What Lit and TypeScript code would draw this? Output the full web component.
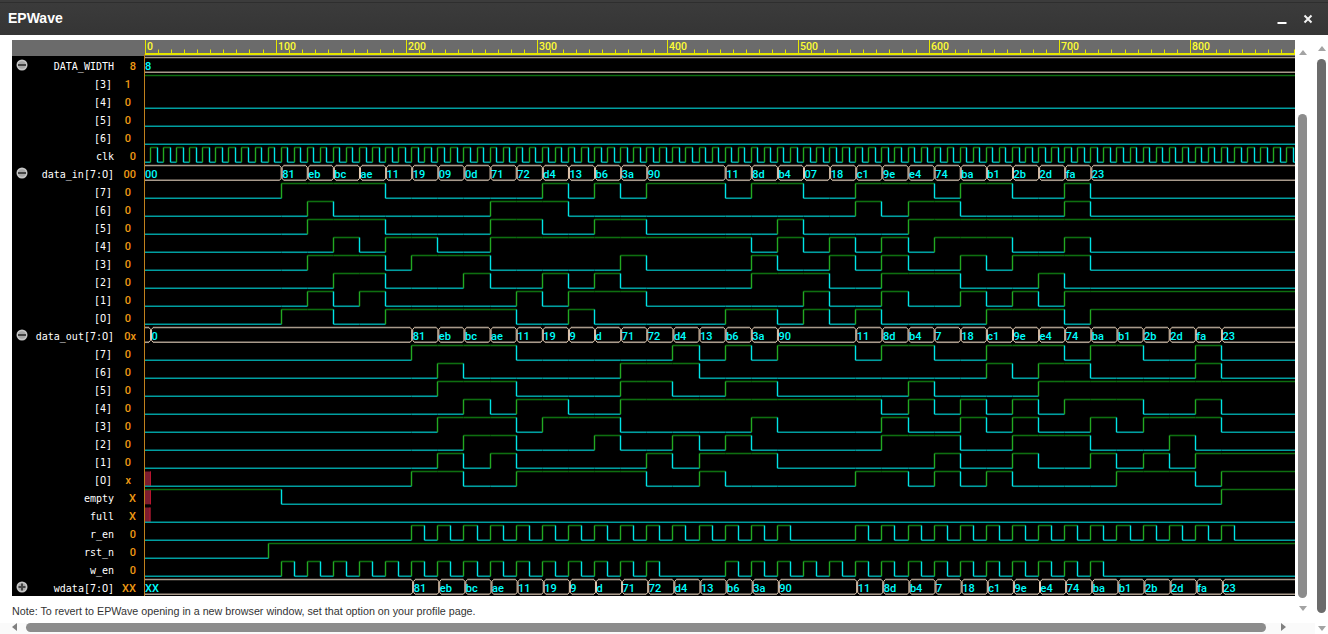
import {LitElement, html, css, svg} from 'lit';
import {customElement} from 'lit/decorators.js';

// time axis of the wave plot
const T0 = 145;
const SCALE = 1.306;
const PLOT_W = 1150;
const ROW = 18;
const TEND = 890;
const xAt = (t: number) => T0 + t * SCALE;
// edges sit on a pixel column, just left of the nominal time
const snap = (x: number) => Math.floor(x) - 0.5;

const IN_VALUES: [number, string][] = [
  [0, '00'], [105, '81'], [125, 'eb'], [145, 'bc'], [165, 'ae'], [185, '11'], [205, '19'], [225, '09'],
  [245, '0d'], [265, '71'], [285, '72'], [305, 'd4'], [325, '13'], [345, 'b6'], [365, '3a'], [385, '90'],
  [445, '11'], [465, '8d'], [485, 'b4'], [505, '07'], [525, '18'], [545, 'c1'], [565, '9e'], [585, 'e4'],
  [605, '74'], [625, 'ba'], [645, 'b1'], [665, '2b'], [685, '2d'], [705, 'fa'], [725, '23'],
];

const strip0 = (v: string) => (v.startsWith('0') && v.length === 2 ? v.slice(1) : v);

// data_out follows data_in 100 later, printed without the leading zero
const OUT_VALUES: [number, string][] = [
  [5, '0'],
  ...IN_VALUES.slice(1).map(([t, v]): [number, string] => [t + 100, strip0(v)]),
];

const WDATA_VALUES: [number, string][] = [[0, 'XX'], ...OUT_VALUES.slice(1)];

type Sig = {
  name: string;
  val: string;
  icon?: 'minus' | 'plus';
  bit?: boolean;
  draw: () => unknown;
};

const bitEdges = (vals: [number, string][], bit: number): [number, number][] =>
  vals.map(([t, v]) => [t, (parseInt(v, 16) >> bit) & 1]);

const pulses = (ranges: [number, number][]) => {
  const out: [number, number][] = [[0, 0]];
  for (const [a, b] of ranges) {
    for (let t = a; t < b; t += 20) {
      out.push([t, 1], [t + 10, 0]);
    }
  }
  return out;
};

function clkEdges() {
  const out: [number, number][] = [[0, 0]];
  for (let t = 5; t < TEND; t += 10) {
    out.push([t, 1], [t + 5, 0]);
  }
  return out;
}

// one bit signal: dark green high, teal low, bright edges
function logic(i: number, edges: [number, number][], start = 0) {
  const hi = 57.5 + ROW * i;
  const lo = 72.25 + ROW * i;
  const parts: unknown[] = [];
  for (let k = 0; k < edges.length; k++) {
    const [t, v] = edges[k];
    if (t < start && k + 1 < edges.length && edges[k + 1][0] <= start) continue;
    const a = t === 0 ? T0 : snap(xAt(Math.max(t, start)));
    const b = k + 1 < edges.length ? snap(xAt(edges[k + 1][0])) : xAt(TEND);
    parts.push(svg`<line class=${v ? 'high' : 'low'} x1=${a} x2=${b} y1=${v ? hi : lo} y2=${v ? hi : lo}></line>`);
    if (k > 0 && edges[k - 1][1] !== v) {
      parts.push(svg`<line class=${v ? 'rise' : 'fall'} x1=${a} x2=${a} y1=${hi} y2=${lo}></line>`);
    }
  }
  return parts;
}

function unknownBox(i: number, w: number) {
  const y = 57.5 + ROW * i;
  return svg`<rect class="xbox" x=${T0} y=${y} width=${w} height="14.8"></rect>
    <rect class="xedge" x=${T0 + w - 1} y=${y} width="1" height="14.8"></rect>`;
}

function bus(i: number, vals: [number, string][], shift = 0) {
  const top = 57.5 + ROW * i;
  const bot = 72.25 + ROW * i;
  const parts: unknown[] = [];
  vals.forEach(([t, v], k) => {
    const a = k === 0 ? T0 : xAt(t) + shift - 0.5;
    const b = k + 1 < vals.length ? xAt(vals[k + 1][0]) + shift - 0.5 : xAt(TEND);
    const l = k === 0 ? a : a + 2;
    const r = b - 2;
    parts.push(svg`<line class="bus" x1=${l} x2=${r} y1=${top} y2=${top}></line>`);
    parts.push(svg`<line class="bus" x1=${l} x2=${r} y1=${bot} y2=${bot}></line>`);
    if (k > 0) {
      parts.push(svg`<path class="cross" d="M${a - 2} ${top}L${a - 0.5} ${top + 2}V${bot - 2}L${a - 2} ${bot}M${a + 2} ${top}L${a + 0.5} ${top + 2}V${bot - 2}L${a + 2} ${bot}"></path>`);
    }
    parts.push(svg`<text class="busval" x=${k === 0 ? a : a + 0.5} y=${top + 12}>${v}</text>`);
  });
  return parts;
}

const inBit = (n: number, i: number) => logic(i, bitEdges(IN_VALUES, n));
const outBit = (n: number, i: number) => logic(i, bitEdges([[0, '00'], ...OUT_VALUES.slice(1)], n));

const SIGNALS: Sig[] = [
  {name: 'DATA_WIDTH', val: '8', icon: 'minus', draw: () => bus(0, [[0, '8']])},
  {name: '[3]', val: '1', bit: true, draw: () => logic(1, [[0, 1]])},
  {name: '[4]', val: '0', bit: true, draw: () => logic(2, [[0, 0]])},
  {name: '[5]', val: '0', bit: true, draw: () => logic(3, [[0, 0]])},
  {name: '[6]', val: '0', bit: true, draw: () => logic(4, [[0, 0]])},
  {name: 'clk', val: '0', draw: () => logic(5, clkEdges())},
  {name: 'data_in[7:0]', val: '00', icon: 'minus', draw: () => bus(6, IN_VALUES)},
  ...[7, 6, 5, 4, 3, 2, 1, 0].map((n, k): Sig => ({name: `[${n}]`, val: '0', bit: true, draw: () => inBit(n, 7 + k)})),
  {name: 'data_out[7:0]', val: '0x', icon: 'minus', draw: () => bus(15, [[0, ''], ...OUT_VALUES])},
  ...[7, 6, 5, 4, 3, 2, 1].map((n, k): Sig => ({name: `[${n}]`, val: '0', bit: true, draw: () => outBit(n, 16 + k)})),
  {name: '[0]', val: 'x', bit: true, draw: () => [unknownBox(23, 6), logic(23, bitEdges([[0, '00'], ...OUT_VALUES.slice(1)], 0), 5)]},
  {name: 'empty', val: 'X', draw: () => [unknownBox(24, 6), logic(24, [[0, 1], [105, 0], [825, 1]], 5)]},
  {name: 'full', val: 'X', draw: () => [unknownBox(25, 5.5), logic(25, [[0, 0]], 5)]},
  {name: 'r_en', val: '0', draw: () => logic(26, pulses([[205, 500], [545, 840]]))},
  {name: 'rst_n', val: '0', draw: () => logic(27, [[0, 0], [95, 1]])},
  {name: 'w_en', val: '0', draw: () => logic(28, pulses([[105, 400], [445, 740]]))},
  {name: 'wdata[7:0]', val: 'XX', icon: 'plus', draw: () => bus(29, WDATA_VALUES, 0.9)},
];

function ruler() {
  const parts: unknown[] = [];
  for (let t = 0; t <= 880; t += 10) {
    const x = Math.round(xAt(t)) + 0.5;
    if (t % 100 === 0) {
      parts.push(svg`<line class="tick" x1=${x} x2=${x} y1="40" y2="54"></line>`);
      parts.push(svg`<text class="rulerval" x=${x + 1.5} y="49.5">${t}</text>`);
    } else {
      parts.push(svg`<line class="tick" x1=${x} x2=${x} y1="49.5" y2="54"></line>`);
    }
  }
  return parts;
}

// the mono face dots its zeros, the reference does not
const plainZeros = (name: string) =>
  name.split(/(0)/).map((p) => (p === '0' ? html`<span class="zero">0</span>` : p));

@customElement('app-root')
export class AppRoot extends LitElement {
  static styles = css`
    :host {
      display: block;
      width: 1328px;
      height: 634px;
      overflow: hidden;
      background: #fff;
      font-family: 'Liberation Sans', Arial, sans-serif;
    }

    .titlebar {
      height: 35px;
      box-sizing: border-box;
      padding: 0 15px 0 8px;
      display: flex;
      align-items: center;
      justify-content: space-between;
      background: linear-gradient(#3c3c3c 0 2px, #2e2e2e 2px 3px, #3b3b3b 3px, #353535 100%);
      color: #fff;
      font-weight: bold;
      font-size: 14px;
    }

    .controls {
      height: 20px;
      display: flex;
      gap: 16px;
      align-items: flex-start;
    }

    .controls .min {
      margin-top: 7.5px;
    }

    .controls .close {
      margin-top: 6.5px;
    }

    .body {
      display: flex;
      height: 599px;
    }

    .left {
      width: 1315px;
      display: flex;
      flex-direction: column;
    }

    .pane {
      height: 588px;
      display: flex;
      padding: 5px 0 0 12px;
      box-sizing: border-box;
    }

    .main {
      width: 1283px;
    }

    .wave {
      display: flex;
      height: 556px;
      background: #000;
    }

    .labels {
      width: 132px;
      flex: none;
      padding-top: 16px;
      position: relative;
    }

    .labels::before {
      content: '';
      position: absolute;
      top: 0;
      left: 0;
      right: 0;
      height: 16px;
      background: #6b6b6b;
    }

    .sig {
      height: 18px;
      display: grid;
      grid-template-columns: 19px 83px 22px;
      font-family: 'DejaVu Sans Mono', 'Liberation Mono', monospace;
      font-size: 10px;
    }

    .sig .name {
      color: #fff;
      text-align: right;
      white-space: nowrap;
      padding-top: 4px;
      line-height: 14px;
    }

    .sig .val {
      color: #f09a14;
      text-align: right;
      padding-top: 4px;
      line-height: 14px;
      font-family: Roboto, sans-serif;
      font-size: 11px;
      font-weight: 500;
    }

    .zero {
      display: inline-block;
      width: 6px;
      text-align: center;
      font-family: Roboto, sans-serif;
      font-size: 11px;
      line-height: 10px;
    }

    .sig.bit .name {
      padding-right: 2px;
    }

    .sig.bit .val {
      padding-right: 5px;
    }

    .icon {
      margin: 3px 0 0 3.5px;
      display: block;
    }

    .plot {
      display: block;
      flex: none;
    }

    .plot .rulerbg {
      fill: #6b6b6b;
    }

    .plot .axis {
      fill: #e6e600;
    }

    .plot .tick {
      stroke: #e6e600;
      stroke-width: 1;
    }

    .plot .rulerval {
      fill: #ffff33;
      font: 500 10.5px Roboto, sans-serif;
    }

    .plot .cursor {
      stroke: #c0801c;
      stroke-width: 1;
    }

    .plot .low {
      stroke: #009ea0;
      stroke-width: 1.6;
    }

    .plot .high {
      stroke: #0e6e10;
      stroke-width: 1.6;
    }

    .plot .rise {
      stroke: #22a822;
      stroke-width: 1.4;
    }

    .plot .fall {
      stroke: #00e4e6;
      stroke-width: 1.4;
    }

    .plot .bus {
      stroke: #a89a8b;
      stroke-width: 1.6;
    }

    .plot .cross {
      stroke: #e6ccb2;
      stroke-width: 1;
      fill: none;
    }

    .plot .busval {
      fill: #00ffff;
      font: 500 11px Roboto, sans-serif;
    }

    .plot .xbox {
      fill: #7d1c2e;
    }

    .plot .xedge {
      fill: #b8142e;
    }

    .note {
      font-size: 10.72px;
      color: #333;
      line-height: 14px;
      margin-top: 8px;
    }

    .vbar {
      display: flex;
      flex-direction: column;
      align-items: center;
      flex: none;
    }

    .inner {
      width: 9px;
      margin-left: 3px;
      height: 575px;
      padding-top: 10px;
      --c: #a3a3a3;
    }

    .inner .thumb {
      background: #8c8c8c;
      margin-top: 59px;
      height: 484px;
      border-radius: 5px;
    }

    .inner .down {
      margin-top: 8px;
    }

    .outer {
      width: 9px;
      margin-left: 2px;
      padding-top: 11px;
      --c: #a3a3a3;
    }

    .outer .thumb {
      background: #6b6b6b;
      margin-top: 8px;
      height: 554px;
      border-radius: 5px;
    }

    .outer .down {
      margin-top: 13px;
    }

    .thumb {
      width: 100%;
    }

    .up {
      width: 0;
      height: 0;
      border: 4.5px solid transparent;
      border-top: 0;
      border-bottom: 5px solid var(--c);
    }

    .down {
      width: 0;
      height: 0;
      border: 4.5px solid transparent;
      border-bottom: 0;
      border-top: 5px solid var(--c);
    }

    .hbar {
      height: 11px;
      display: flex;
      align-items: flex-start;
      background: #fafafa;
      padding-left: 12px;
    }

    .hbar .lf,
    .hbar .rt {
      width: 0;
      height: 0;
      border: 4.5px solid transparent;
    }

    .hbar .lf {
      border-left: 0;
      border-right: 5px solid #808080;
    }

    .hbar .rt {
      border-right: 0;
      border-left: 5px solid #808080;
      margin-left: 15px;
    }

    .hbar .thumb {
      width: 1240px;
      height: 9px;
      border-radius: 5px;
      background: #8c8c8c;
      margin-left: 9px;
    }
  `;

  private renderIcon(kind: 'minus' | 'plus') {
    return html`<svg class="icon" width="12" height="12" viewBox="0 0 12 12">
      <circle cx="6" cy="6" r="5.5" fill="#c6c6c6"></circle>
      <circle cx="6" cy="6" r="3.8" fill="#a6a6a6"></circle>
      <path d=${kind === 'minus' ? 'M2 5h8v2h-8z' : 'M2.5 5h2.5v-2.5h2v2.5h2.5v2h-2.5v2.5h-2v-2.5h-2.5z'} fill="#444"></path>
    </svg>`;
  }

  render() {
    return html`
      <div class="titlebar">
        <span>EPWave</span>
        <div class="controls">
          <svg class="min" width="10" height="10" viewBox="0 0 10 10"><rect x="0.5" y="7" width="9" height="2" fill="#fff"></rect></svg>
          <svg class="close" width="10" height="10" viewBox="0 0 10 10"><path d="M1.5 1.5l7 7M8.5 1.5l-7 7" stroke="#f2f2f2" stroke-width="2"></path></svg>
        </div>
      </div>
      <div class="body">
        <div class="left">
          <div class="pane">
            <div class="main">
              <div class="wave">
                <div class="labels">
                  ${SIGNALS.map(
                    (s) => html`<div class="sig ${s.bit ? 'bit' : ''}">
                      ${s.icon ? this.renderIcon(s.icon) : html`<span></span>`}
                      <span class="name">${plainZeros(s.name)}</span>
                      <span class="val">${s.val}</span>
                    </div>`
                  )}
                </div>
                <svg class="plot" width=${PLOT_W + 1} height="556" viewBox="144 40 ${PLOT_W + 1} 556">
                  <rect class="rulerbg" x="144" y="40" width=${PLOT_W + 1} height="16"></rect>
                  <rect class="axis" x="145" y="53" width=${PLOT_W} height="2"></rect>
                  ${ruler()}
                  ${SIGNALS.map((s) => s.draw())}
                  <line class="cursor" x1="144.5" x2="144.5" y1="54" y2="596"></line>
                </svg>
              </div>
              <div class="note">Note: To revert to EPWave opening in a new browser window, set that option on your profile page.</div>
            </div>
            <div class="vbar inner">
              <div class="up"></div>
              <div class="thumb"></div>
              <div class="down"></div>
            </div>
          </div>
          <div class="hbar">
            <div class="lf"></div>
            <div class="thumb"></div>
            <div class="rt"></div>
          </div>
        </div>
        <div class="vbar outer">
          <div class="up"></div>
          <div class="thumb"></div>
          <div class="down"></div>
        </div>
      </div>
    `;
  }
}
